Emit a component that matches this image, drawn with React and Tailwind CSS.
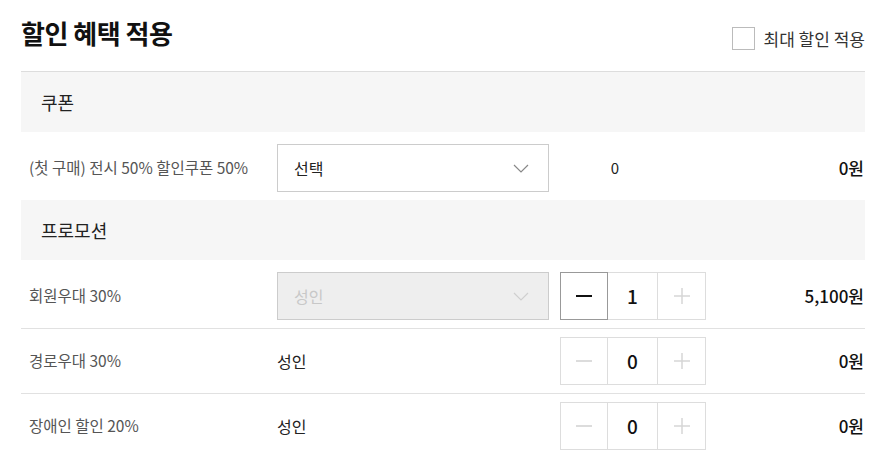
import React from "react";

const font = { fontFamily: '"Noto Sans CJK KR", "Noto Sans", sans-serif' };

function Chevron({ disabled }) {
  return (
    <svg width="16" height="9" viewBox="0 0 16 9" fill="none">
      <path d="M1 1L8 8L15 1" stroke={disabled ? "#cfcfcf" : "#888"} strokeWidth="1.2" />
    </svg>
  );
}

function Select({ value, disabled }) {
  return (
    <div
      className={`w-[272px] h-[48px] flex items-center justify-between pl-4 pr-[19px] border ${
        disabled ? "bg-[#eeeeee] border-[#cccccc] text-[#c8c8c8]" : "bg-white border-[#cccccc] text-[#222]"
      } text-[16px]`}
    >
      <span>{value}</span>
      <Chevron disabled={disabled} />
    </div>
  );
}

function Stepper({ count, active }) {
  return (
    <div className="flex h-[48px]">
      <div
        className={`w-[48px] h-[48px] flex items-center justify-center border ${
          active ? "border-[#999]" : "border-[#dddddd]"
        }`}
      >
        <div className={`w-[16px] h-[2px] ${active ? "bg-[#111]" : "bg-[#dcdcdc]"}`} />
      </div>
      <div className="w-[50px] h-[48px] flex items-center justify-center border-y border-r border-[#dddddd] text-[19px] font-medium text-[#111]">
        {count}
      </div>
      <div className="w-[48px] h-[48px] flex items-center justify-center border-y border-r border-[#dddddd]">
        <svg width="18" height="18" viewBox="0 0 18 18">
          <path d="M9 1V17M1 9H17" stroke="#d6d6d6" strokeWidth="1.5" />
        </svg>
      </div>
    </div>
  );
}

function SectionHeader({ title }) {
  return (
    <div className="h-[60px] bg-[#f6f6f6] flex items-center pl-5 text-[18px] text-[#222]">{title}</div>
  );
}

function Row({ label, children, amount, last }) {
  return (
    <div className={`flex items-center py-2 ${last ? "" : "border-b border-[#e1e1e1]"}`}>
      <div className="w-[256px] pl-2 text-[15.5px] text-[#555]">{label}</div>
      {children}
      <div className="flex-1 text-right text-[17px] font-medium text-[#111] pr-px">{amount}</div>
    </div>
  );
}

export default function App() {
  return (
    <div className="w-[885px] h-[465px] bg-white overflow-hidden" style={font}>
      <div className="ml-[21px] w-[844px]">
        <div className="h-[71px] flex justify-between items-start">
          <h1 className="text-[26px] font-bold text-[#111] mt-[14px] leading-[38px] tracking-[-0.5px]">할인 혜택 적용</h1>
          <label className="flex items-center gap-[9px] mt-[27px]">
            <span className="w-[23px] h-[23px] border border-[#bbbbbb] bg-white" />
            <span className="text-[17px] text-[#333] leading-[23px]">최대 할인 적용</span>
          </label>
        </div>
        <div className="border-t border-[#dddddd]">
          <SectionHeader title="쿠폰" />
          <div className="pt-1">
            <Row label="(첫 구매) 전시 50% 할인쿠폰 50%" amount="0원" last>
              <Select value="선택" />
              <div className="ml-[11px] w-[110px] text-center text-[15px] text-[#222]">0</div>
            </Row>
          </div>
          <SectionHeader title="프로모션" />
          <div className="pt-1">
            <Row label="회원우대 30%" amount="5,100원">
              <Select value="성인" disabled />
              <div className="ml-[11px]">
                <Stepper count="1" active />
              </div>
            </Row>
            <Row label="경로우대 30%" amount="0원">
              <div className="w-[272px] text-[16px] text-[#222]">성인</div>
              <div className="ml-[11px]">
                <Stepper count="0" />
              </div>
            </Row>
            <Row label="장애인 할인 20%" amount="0원" last>
              <div className="w-[272px] text-[16px] text-[#222]">성인</div>
              <div className="ml-[11px]">
                <Stepper count="0" />
              </div>
            </Row>
          </div>
        </div>
      </div>
    </div>
  );
}
